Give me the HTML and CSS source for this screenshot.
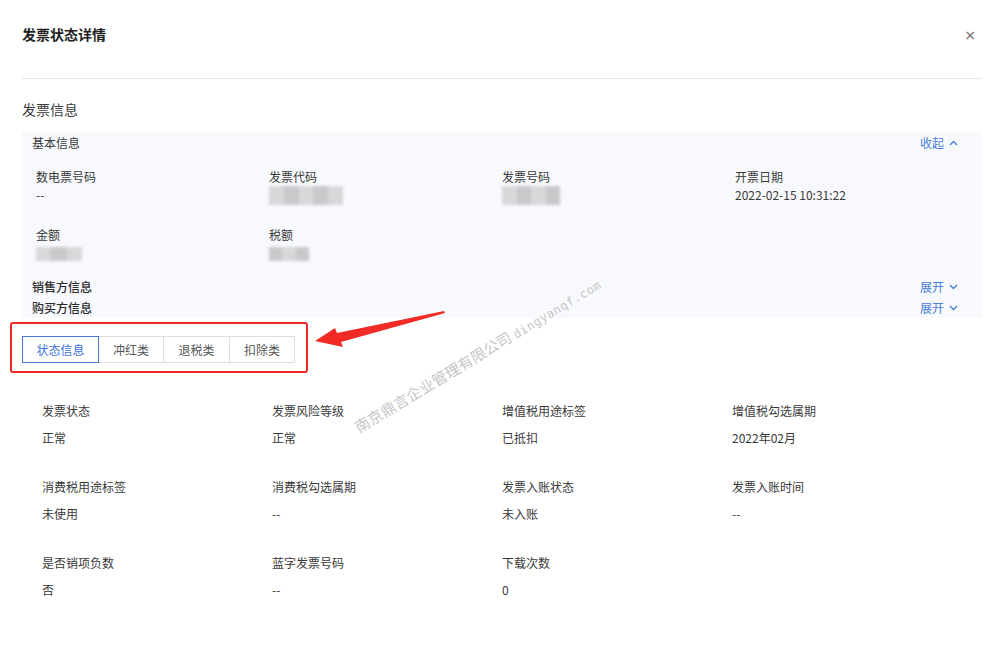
FILE: index.html
```html
<!DOCTYPE html>
<html lang="zh-CN">
<head>
<meta charset="utf-8">
<title>发票状态详情</title>
<link rel="stylesheet" href="styles.css">
</head>
<body>
<div class="modal">
  <div class="modal-header">
    <div class="modal-title">发票状态详情</div>
    <div class="modal-close">×</div>
  </div>

  <div class="section-title">发票信息</div>

  <div class="panel">
    <div class="panel-row">
      <span class="panel-row-title">基本信息</span>
      <span class="toggle">收起<svg class="chev" width="9" height="6" viewBox="0 0 9 6"><polyline points="1,5 4.5,1.5 8,5" fill="none" stroke="#4a7fd6" stroke-width="1.4"/></svg></span>
    </div>
    <div class="info-grid">
      <div class="item"><div class="label">数电票号码</div><div class="value">--</div></div>
      <div class="item"><div class="label">发票代码</div><div class="value"><span class="blur w74"><i></i><i class="d"></i><i></i><i class="d"></i><i></i></span></div></div>
      <div class="item"><div class="label">发票号码</div><div class="value"><span class="blur w58"><i></i><i class="d"></i><i></i><i class="d"></i></span></div></div>
      <div class="item"><div class="label">开票日期</div><div class="value">2022-02-15 10:31:22</div></div>
      <div class="item"><div class="label">金额</div><div class="value"><span class="blur w46 sm"><i></i><i class="d"></i><i></i></span></div></div>
      <div class="item"><div class="label">税额</div><div class="value"><span class="blur w40 sm"><i class="d"></i><i></i><i class="d"></i></span></div></div>
    </div>
    <div class="fold-row">
      <span class="fold-title">销售方信息</span>
      <span class="toggle">展开<svg class="chev" width="9" height="6" viewBox="0 0 9 6"><polyline points="1,1 4.5,4.5 8,1" fill="none" stroke="#4a7fd6" stroke-width="1.4"/></svg></span>
    </div>
    <div class="fold-row">
      <span class="fold-title">购买方信息</span>
      <span class="toggle">展开<svg class="chev" width="9" height="6" viewBox="0 0 9 6"><polyline points="1,1 4.5,4.5 8,1" fill="none" stroke="#4a7fd6" stroke-width="1.4"/></svg></span>
    </div>
  </div>

  <div class="mark-box">
    <div class="tabs">
      <div class="tab active">状态信息</div>
      <div class="tab t2">冲红类</div>
      <div class="tab t3">退税类</div>
      <div class="tab t4">扣除类</div>
    </div>
  </div>

  <div class="status-grid">
    <div class="item"><div class="label">发票状态</div><div class="value">正常</div></div>
    <div class="item"><div class="label">发票风险等级</div><div class="value">正常</div></div>
    <div class="item"><div class="label">增值税用途标签</div><div class="value">已抵扣</div></div>
    <div class="item"><div class="label">增值税勾选属期</div><div class="value">2022年02月</div></div>
    <div class="item"><div class="label">消费税用途标签</div><div class="value">未使用</div></div>
    <div class="item"><div class="label">消费税勾选属期</div><div class="value">--</div></div>
    <div class="item"><div class="label">发票入账状态</div><div class="value">未入账</div></div>
    <div class="item"><div class="label">发票入账时间</div><div class="value">--</div></div>
    <div class="item"><div class="label">是否销项负数</div><div class="value">否</div></div>
    <div class="item"><div class="label">蓝字发票号码</div><div class="value">--</div></div>
    <div class="item"><div class="label">下载次数</div><div class="value">0</div></div>
  </div>
</div>

<svg class="arrow" width="140" height="50" viewBox="0 0 140 50">
  <polygon points="131,1 132,3 28,32 30,37 2,31 22,18 24,23" fill="#f02a24"/>
</svg>

<div class="watermark"><span class="wm-cn">南京鼎言企业管理有限公司</span> <span class="wm-en">dingyanqf.com</span></div>
</body>
</html>
```

FILE: styles.css
```css
html, body {
  margin: 0;
  padding: 0;
  background: #fff;
}
body {
  position: relative;
  width: 1000px;
  height: 653px;
  overflow: hidden;
  font-family: "Noto Sans CJK SC", "Noto Sans", sans-serif;
  color: #3a3a3a;
  font-size: 12px;
}
.modal {
  padding: 0 18px 0 22px;
}
.modal-header {
  height: 79px;
  box-sizing: border-box;
  padding-top: 25px;
  display: flex;
  justify-content: space-between;
  align-items: flex-start;
  border-bottom: 1px solid #e6e6e6;
}
.modal-title {
  font-size: 14px;
  line-height: 18px;
  font-weight: 700;
  color: #1f1f1f;
}
.modal-close {
  font-family: "DejaVu Sans", sans-serif;
  font-size: 14px;
  line-height: 16px;
  color: #666;
  margin-right: 6px;
  margin-top: 2px;
}
.section-title {
  margin-top: 20px;
  font-size: 14px;
  line-height: 20px;
  color: #3a3a3a;
}
.panel {
  margin-top: 13px;
  background: #f7f9fc;
  padding: 0 24px 0 10px;
}
.panel-row, .fold-row {
  display: flex;
  justify-content: space-between;
  align-items: center;
}
.panel-row {
  height: 21px;
}
.fold-row {
  height: 21px;
}
.panel-row-title {
  line-height: 20px;
  color: #3a3a3a;
}
.fold-title {
  line-height: 21px;
  font-weight: 500;
  color: #2c2c2c;
}
.toggle {
  color: #4a7fd6;
  display: flex;
  align-items: center;
  gap: 5px;
  line-height: 20px;
}
.chev {
  display: block;
}
.info-grid {
  display: grid;
  grid-template-columns: repeat(4, 233px);
  margin: 15px 0 11px 4px;
  row-gap: 22px;
}
.info-grid .label,
.info-grid .value {
  line-height: 18px;
  height: 18px;
}
.value {
  color: #3a3a3a;
}
.blur {
  display: flex;
  height: 19px;
  filter: blur(1.5px);
}
.blur.sm {
  height: 14px;
  margin-top: 3px;
}
.blur i {
  flex: 1;
  background: #d8d8da;
}
.blur i.d {
  background: #c9c9cc;
}
.w74 { width: 74px; }
.w58 { width: 58px; }
.w46 { width: 46px; }
.w40 { width: 40px; }
.mark-box {
  margin: 4px 0 0 -12px;
  width: 298px;
  box-sizing: border-box;
  border: 2px solid #ee2a24;
  border-radius: 3px;
  padding: 12px 11px 8px 10px;
}
.tabs {
  display: flex;
}
.tab {
  height: 27px;
  box-sizing: border-box;
  border: 1px solid #dedede;
  border-left: none;
  display: flex;
  align-items: center;
  justify-content: center;
  color: #555;
  line-height: 16px;
  width: 65px;
}
.tab.t3 { width: 66px; }
.tab.active {
  width: 77px;
  border: 1px solid #4a78d0;
  color: #3d74d6;
}
.status-grid {
  display: grid;
  grid-template-columns: repeat(4, 230px);
  margin: 29px 0 0 20px;
  row-gap: 31px;
}
.status-grid .label,
.status-grid .value {
  line-height: 18px;
  height: 18px;
}
.status-grid .value {
  margin-top: 9px;
}
.arrow {
  position: absolute;
  left: 313px;
  top: 310px;
}
.watermark {
  position: absolute;
  left: 478px;
  top: 356px;
  transform: translate(-50%, -50%) rotate(-31deg);
  white-space: nowrap;
  color: #c6c6c6;
  font-size: 15px;
  line-height: 18px;
  pointer-events: none;
}
.wm-en {
  font-family: "DejaVu Sans Mono", monospace;
  font-size: 12px;
  letter-spacing: 0.5px;
}
```
